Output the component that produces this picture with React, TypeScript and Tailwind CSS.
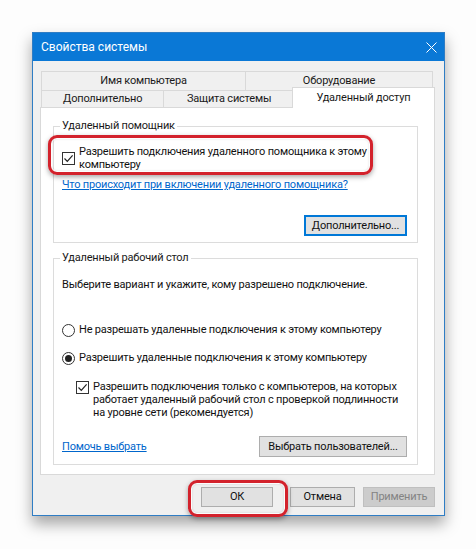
const Checkbox = () => (
  <span className="flex h-[13px] w-[13px] shrink-0 items-center justify-center border border-[#333333] bg-white">
    <svg width="11" height="11" viewBox="0 0 11 11">
      <path d="M1.5 5.5 L4.3 8.3 L9.6 2.4" fill="none" stroke="#222222" strokeWidth="1.2" />
    </svg>
  </span>
);

const Radio = ({ checked }: { checked?: boolean }) => (
  <span className="flex h-[13px] w-[13px] shrink-0 items-center justify-center rounded-full border border-[#333333] bg-white">
    {checked && <span className="h-[7px] w-[7px] rounded-full bg-[#222222]" />}
  </span>
);

const RedRing = ({ className }: { className: string }) => (
  <div
    className={`pointer-events-none absolute rounded-[9px] border-[3px] border-[#d3222c] shadow-[0_2px_5px_rgba(0,0,0,0.35),inset_0_0_0_1px_rgba(255,255,255,0.9),inset_0_0_3px_rgba(0,0,0,0.25)] ${className}`}
  />
);

export default function App() {
  return (
    <div className="min-h-[549px] bg-[#fdfdfd] pl-[32px] pt-[32px] font-['Roboto',sans-serif] text-[11px] leading-[16px] tracking-[-0.2px] text-[#111111]">
      <div className="w-[413px] border border-[#2f7dc4] bg-[#f0f0f0] shadow-[0_8px_14px_rgba(0,0,0,0.35)]">
        {/* Title bar */}
        <div className="flex h-[28px] items-center justify-between bg-[#0a78d6] pl-[8px] pr-[7px] text-[12px] tracking-normal text-white">
          <span>Свойства системы</span>
          <svg width="11" height="11" viewBox="0 0 11 11">
            <path d="M0.5 0.5 L10.5 10.5 M10.5 0.5 L0.5 10.5" stroke="#ffffff" strokeWidth="1" />
          </svg>
        </div>

        <div className="px-[7px] pb-[8px] pt-[10px]">
          {/* Tabs */}
          <div className="ml-[1px] w-[394px] text-[#1a1a1a]">
            <div className="flex h-[19px]">
              <div className="flex w-[205px] items-center justify-center border border-b-0 border-[#d9d9d9]">
                Имя компьютера
              </div>
              <div className="-ml-px flex w-[188px] items-center justify-center border border-b-0 border-[#d9d9d9]">
                Оборудование
              </div>
            </div>
            <div className="flex h-[17px] items-end">
              <div className="flex h-[17px] w-[124px] items-center justify-center border border-b-0 border-[#d9d9d9]">
                Дополнительно
              </div>
              <div className="-ml-px flex h-[17px] w-[132px] items-center justify-center border border-b-0 border-[#d9d9d9]">
                Защита системы
              </div>
              <div className="relative z-10 -mb-px -ml-[3px] flex h-[21px] w-[144px] items-center justify-center border border-b-0 border-[#d9d9d9] bg-white pb-[1px]">
                Удаленный доступ
              </div>
            </div>
          </div>

          {/* Panel */}
          <div className="h-[368px] w-[395px] border border-[#d9d9d9] bg-white pt-[10px]">
            <fieldset className="ml-[12px] w-[365px] min-w-0 border border-[#dcdcdc] px-[8px] pb-[6px]">
              <legend className="ml-[-2px] px-[2px] text-[#1a1a1a]">Удаленный помощник</legend>
              <div className="relative mt-[11px] flex items-center gap-[4px] leading-[13px]">
                <RedRing className="-left-[14px] -top-[10px] h-[40px] w-[325px]" />
                <Checkbox />
                <span className="whitespace-nowrap">
                  Разрешить подключения удаленного помощника к этому
                  <br />
                  компьютеру
                </span>
              </div>
              <div className="mt-[6px] text-[#0066cc] underline">
                Что происходит при включении удаленного помощника?
              </div>
              <div className="mt-[22px] flex justify-end pr-[2px]">
                <button className="h-[21px] w-[103px] border-2 border-[#0078d7] bg-[#e1e1e1] leading-[15px]">
                  Дополнительно...
                </button>
              </div>
            </fieldset>

            <fieldset className="ml-[12px] mt-[7px] w-[365px] min-w-0 border border-[#dcdcdc] px-[8px] pb-[7px]">
              <legend className="ml-[-2px] px-[2px] text-[#1a1a1a]">Удаленный рабочий стол</legend>
              <div className="mt-[11px]">Выберите вариант и укажите, кому разрешено подключение.</div>
              <div className="mt-[29px] flex items-center gap-[4px]">
                <Radio />
                <span>Не разрешать удаленные подключения к этому компьютеру</span>
              </div>
              <div className="mt-[12px] flex items-center gap-[4px]">
                <Radio checked />
                <span>Разрешить удаленные подключения к этому компьютеру</span>
              </div>
              <div className="ml-[14px] mt-[14px] flex items-start gap-[4px] leading-[13px]">
                <span className="mt-[1px]">
                  <Checkbox />
                </span>
                <span className="whitespace-nowrap">
                  Разрешить подключения только с компьютеров, на которых
                  <br />
                  работает удаленный рабочий стол с проверкой подлинности
                  <br />
                  на уровне сети (рекомендуется)
                </span>
              </div>
              <div className="mt-[17px] flex items-center justify-between pr-[2px]">
                <span className="text-[#0066cc] underline">Помочь выбрать</span>
                <button className="h-[21px] w-[148px] whitespace-nowrap border border-[#adadad] bg-[#e1e1e1]">
                  Выбрать пользователей...
                </button>
              </div>
            </fieldset>
          </div>

          {/* Dialog buttons */}
          <div className="mt-[12px] flex h-[20px] justify-end pr-[2px]">
            <div className="relative">
              <RedRing className="-left-[13px] -top-[7px] h-[37px] w-[100px]" />
              <button className="h-[20px] w-[72px] border border-[#adadad] bg-[#e1e1e1]">ОК</button>
            </div>
            <button className="ml-[17px] h-[20px] w-[65px] border border-[#adadad] bg-[#e1e1e1]">
              Отмена
            </button>
            <button className="ml-[8px] h-[20px] w-[72px] border border-[#bfbfbf] bg-[#cccccc] text-[#838383]">
              Применить
            </button>
          </div>
        </div>
      </div>
    </div>
  );
}
